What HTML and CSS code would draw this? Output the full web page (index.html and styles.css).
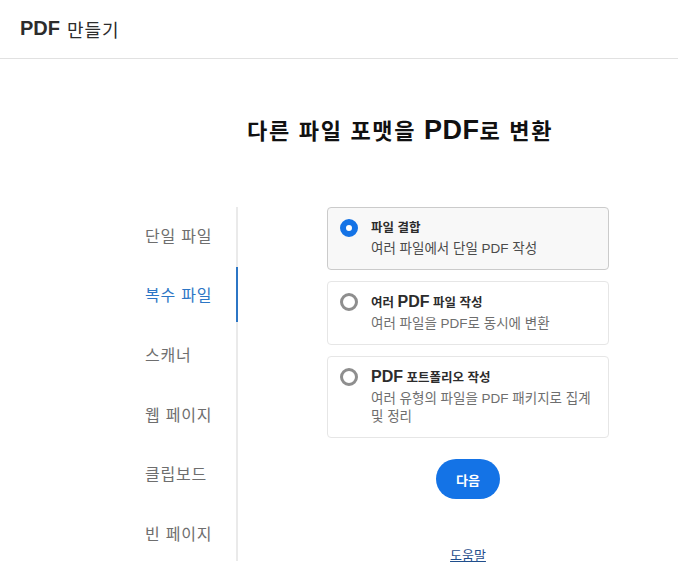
FILE: index.html
```html
<!DOCTYPE html>
<html lang="ko">
<head>
<meta charset="utf-8">
<title>PDF 만들기</title>
<link rel="stylesheet" href="styles.css">
</head>
<body>
<header class="topbar">
  <span class="brand-pdf">PDF</span><span class="brand-ko">만들기</span>
</header>
<main class="main">
  <h1 class="title">다른 파일 포맷을 <span class="title-pdf">PDF</span>로 변환</h1>
  <div class="body">
    <nav class="nav">
      <div class="nav-item">단일 파일</div>
      <div class="nav-item active">복수 파일</div>
      <div class="nav-item">스캐너</div>
      <div class="nav-item">웹 페이지</div>
      <div class="nav-item">클립보드</div>
      <div class="nav-item">빈 페이지</div>
    </nav>
    <section class="panel">
      <div class="card selected">
        <span class="radio checked"></span>
        <div class="card-text">
          <div class="card-title">파일 결합</div>
          <div class="card-desc">여러 파일에서 단일 PDF 작성</div>
        </div>
      </div>
      <div class="card">
        <span class="radio"></span>
        <div class="card-text">
          <div class="card-title">여러 <span class="big">PDF</span> 파일 작성</div>
          <div class="card-desc">여러 파일을 PDF로 동시에 변환</div>
        </div>
      </div>
      <div class="card">
        <span class="radio"></span>
        <div class="card-text">
          <div class="card-title"><span class="big">PDF</span> 포트폴리오 작성</div>
          <div class="card-desc">여러 유형의 파일을 PDF 패키지로 집계 및 정리</div>
        </div>
      </div>
      <button class="next">다음</button>
      <a class="help" href="#">도움말</a>
    </section>
  </div>
</main>
</body>
</html>
```

FILE: styles.css
```css
* { box-sizing: border-box; }
body {
  margin: 0;
  font-family: "Liberation Sans", "Noto Sans CJK KR", sans-serif;
  color: #2c2c2c;
  background: #fff;
}
.topbar {
  height: 59px;
  border-bottom: 1px solid #e1e1e1;
  display: flex;
  align-items: center;
  padding-left: 20px;
  padding-bottom: 1px;
}
.brand-pdf {
  font-weight: bold;
  font-size: 20px;
  color: #2c2c2c;
}
.brand-ko {
  font-size: 18px;
  margin-left: 7px;
  letter-spacing: 1px;
  color: #2c2c2c;
}
.main {
  padding-top: 56px;
}
.title {
  margin: 0 0 0 247px;
  font-size: 22px;
  font-weight: bold;
  color: #111;
  line-height: 30px;
  letter-spacing: 1.7px;
}
.title-pdf {
  font-size: 27px;
  letter-spacing: 0.5px;
}
.body {
  display: flex;
  margin-top: 60px;
}
.nav {
  margin-left: 145px;
  width: 93px;
  height: 354px;
  border-right: 2px solid #eaeaea;
  display: flex;
  flex-direction: column;
}
.nav-item {
  height: 59.6px;
  flex: none;
  display: flex;
  align-items: center;
  font-size: 16px;
  letter-spacing: 0.8px;
  color: #6e6e6e;
  margin-right: -2px;
  border-right: 2px solid transparent;
  padding-bottom: 4px;
}
.nav-item.active {
  color: #2c76c5;
  border-right-color: #2c76c5;
  height: 55px;
  margin-bottom: 4.6px;
  padding-bottom: 0;
}
.panel {
  margin-left: 89px;
  width: 282px;
  display: flex;
  flex-direction: column;
  align-items: center;
}
.card {
  width: 282px;
  border: 1px solid #e6e6e6;
  border-radius: 4px;
  display: flex;
  align-items: flex-start;
  padding: 10px 10px 11px 12px;
  margin-bottom: 11px;
  background: #fff;
}
.card.selected {
  background: #f8f8f8;
  border-color: #cbcbcb;
}
.card.tall {
  padding-bottom: 10px;
}
.radio {
  flex: none;
  width: 18px;
  height: 18px;
  border-radius: 50%;
  border: 3px solid #8e8e8e;
  margin-top: 1px;
  margin-right: 13px;
}
.radio.checked {
  border: 6px solid #1473e6;
  background: #fff;
}
.card-text {
  flex: 1;
}
.card-title {
  font-size: 12.5px;
  font-weight: bold;
  color: #2c2c2c;
  line-height: 20px;
}
.card-title .big {
  font-size: 16px;
}
.card-desc {
  font-size: 13.5px;
  color: #4b4b4b;
  line-height: 18px;
  margin-top: 2px;
}
.card:not(.selected) .card-desc {
  color: #6e6e6e;
}
.next {
  margin-top: 10px;
  width: 64px;
  height: 40px;
  border: none;
  border-radius: 20px;
  background: #1473e6;
  color: #fff;
  font-family: inherit;
  font-size: 13px;
  font-weight: bold;
}
.help {
  margin-top: 46px;
  font-size: 13px;
  color: #1f4e8c;
  text-decoration: underline;
}
```
